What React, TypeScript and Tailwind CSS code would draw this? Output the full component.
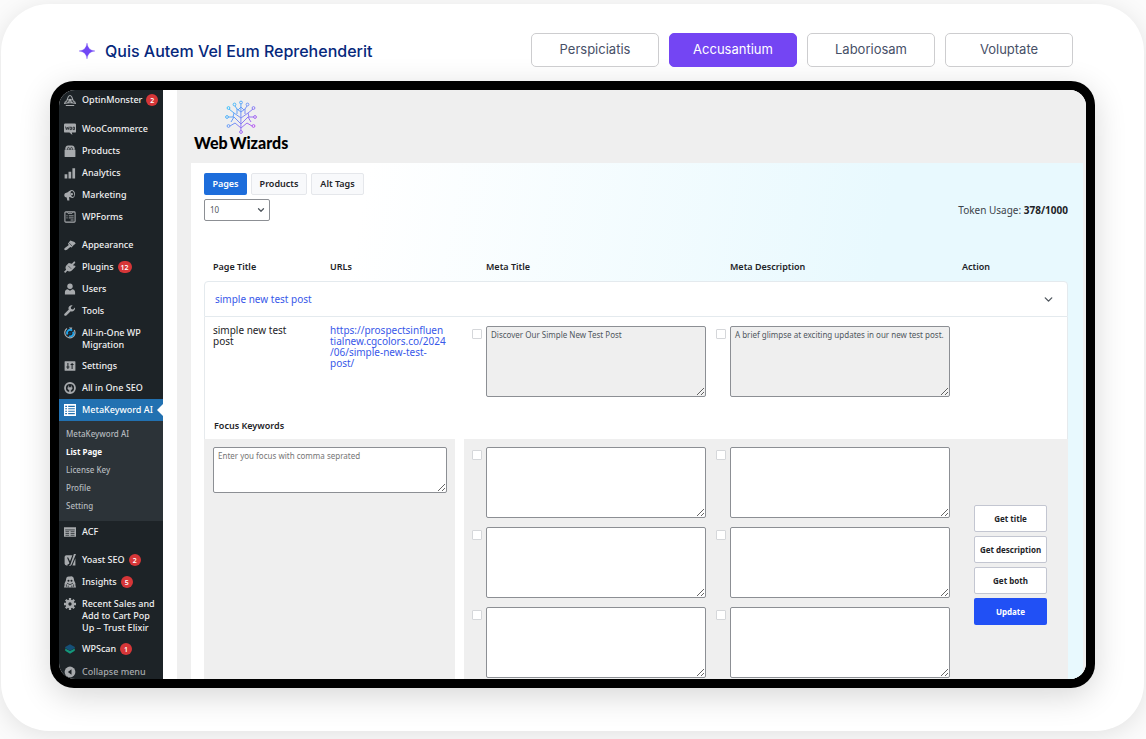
import type { ReactNode } from "react";
import { ChevronDown } from "lucide-react";

const topTabs = ["Perspiciatis", "Accusantium", "Laboriosam", "Voluptate"];

function Glyph({ children, box = 20 }: { children: ReactNode; box?: number }) {
  return (
    <svg viewBox={`0 0 ${box} ${box}`} className="size-3 shrink-0" fill="currentColor" aria-hidden="true">
      {children}
    </svg>
  );
}

const icons: Record<string, ReactNode> = {
  monster: (
    <Glyph>
      <path d="M4 13 7 5q3-5 6 0l3 8M0 16q10-3 20 0M3 19h14M6 9l8 5M14 9l-8 5" fill="none" stroke="currentColor" strokeWidth="1.700" />
      <circle cx="10" cy="10" r="2.200" />
      <path d="m0 14 3-3v4zM20 14l-3-3v4z" />
    </Glyph>
  ),
  woo: (
    <Glyph>
      <path d="M2 1h16a2 2 0 0 1 2 2v11a2 2 0 0 1-2 2h-5l1 4-5-4H2a2 2 0 0 1-2-2V3a2 2 0 0 1 2-2z" />
      <path d="m2.500 6 1.500 5 1.500-4 1.500 4 1.500-5M10 7h2.500v4H10zM15 7h2.500v4H15z" fill="none" stroke="#1d2327" strokeWidth="1.300" />
    </Glyph>
  ),
  products: (
    <Glyph>
      <path d="M1 8h18v11a1 1 0 0 1-1 1H2a1 1 0 0 1-1-1z" />
      <path d="M2 8q0-7 5-7h6q5 0 5 7" />
      <path d="M6 8V6q0-2 1.500-2T9 6v2M11 8V6q0-2 1.500-2T14 6v2" fill="none" stroke="#1d2327" strokeWidth="1.200" />
    </Glyph>
  ),
  analytics: (
    <Glyph>
      <path d="M1 12h4.500v7H1zM7.500 8H12v11H7.500zM14 2h4.500v17H14z" />
    </Glyph>
  ),
  marketing: (
    <Glyph>
      <path d="M12.500 1.500c3.500 0 6 3 6 7s-2 6.500-5 6.500c-1.500 0-2.500-1-4-1.500l-1 .2.500 5.300H5.500L4.500 14C2 14 .5 12.500.5 10.300c0-2 1.300-3.500 3.500-4C7 5.500 9.500 1.500 12.500 1.500z" />
      <ellipse cx="14" cy="8.200" rx="2.900" ry="5" fill="#1d2327" transform="rotate(-14 14 8)" />
      <circle cx="13" cy="8.500" r="2" />
    </Glyph>
  ),
  forms: (
    <Glyph>
      <rect x="1.500" y="1.500" width="17" height="17" rx="1.500" fill="none" stroke="currentColor" strokeWidth="1.800" />
      <path d="m5 2 3 3 2-2 2 2 3-3M4 8h2M8 8h8M4 11.500h2M8 11.500h8M11 15h5" fill="none" stroke="currentColor" strokeWidth="1.500" />
    </Glyph>
  ),
  appearance: (
    <Glyph>
      <path d="m10.500 2.500 7 2.500 2 2.500-4 3.500-2.500 3-2.500-.5-5.500 4.500c-1.500 1-4 1-4.500-.5s.5-2.500 2-3.500L8 10 6.500 8z" />
      <path d="m8.500 6.500 5.500 6" stroke="#1d2327" strokeWidth="1" />
    </Glyph>
  ),
  plugins: (
    <Glyph>
      <path d="m13.100 4.400 3.100-3.300c.5-.5 1.700-.6 2.200 0s.5 1.600 0 2.100l-3.200 3.300 1.700 1.700 1.300-1.300 1 2.600-6.200 6.200c-2 2-5.200 2.200-7.400.7L2 20 0 18l3.500-3.600C2 12.200 2.200 9 4.200 7L8 3.200z" />
      <path d="m7 8 5 5" stroke="#1d2327" strokeWidth="1" />
    </Glyph>
  ),
  users: (
    <Glyph>
      <circle cx="10" cy="5.500" r="4.500" />
      <path d="M1.500 19v-3.500c0-3 2.500-5 4.500-5l4 2.500 4-2.500c2 0 4.500 2 4.500 5V19z" />
    </Glyph>
  ),
  tools: (
    <Glyph>
      <path d="M16.700 9.300c-1.500 1.500-3.700 1.800-5.500 1L4 17.500c-.8.800-2.300.8-3.100 0s-.8-2.200 0-3L8 7.500c-1-2-.6-4 .9-5.500S12.500 0 14.300.7l-3 3 .7 2.800 3 .8 3.100-3c.8 1.800.2 3.400-1.400 5z" />
    </Glyph>
  ),
  migration: (
    <Glyph>
      <path d="M5 2.500A8.500 8.500 0 1 0 17 5" fill="none" stroke="currentColor" strokeWidth="2" />
      <path d="M8 1h6l-2 4z" />
      <path d="M6 12.500A5 5 0 0 1 13.500 6M15 8a5 5 0 0 1-6.500 7" fill="none" stroke="#1fa2e8" strokeWidth="3" />
      <circle cx="10.300" cy="10.300" r="1.500" fill="#0b4468" />
    </Glyph>
  ),
  settings: (
    <Glyph>
      <path d="M2 2h16a1 1 0 0 1 1 1v14a1 1 0 0 1-1 1H2a1 1 0 0 1-1-1V3a1 1 0 0 1 1-1z" />
      <path d="M6.500 5v10M13.500 5v10M4 11.500h5M11 7.500h5" stroke="#1d2327" strokeWidth="1.700" />
    </Glyph>
  ),
  seo: (
    <Glyph>
      <circle cx="10" cy="10" r="8.300" fill="none" stroke="currentColor" strokeWidth="3" />
      <path d="M7.500 6v3M12.500 6v3M6.500 9h7v2.500L11 13.500V17H9v-3.500l-2.500-2z" stroke="currentColor" strokeWidth="1" />
    </Glyph>
  ),
  list: (
    <Glyph>
      <rect x="0" y="0" width="20" height="20" fill="#fff" />
      <path d="M2 4h3M2 8h3M2 12h3M2 16h3M7 4h11M7 8h11M7 12h11M7 16h11" stroke="#2271b1" strokeWidth="1.900" />
    </Glyph>
  ),
  acf: (
    <Glyph>
      <path d="M0 2h20v16H0z" />
      <path d="M2 6.500h16M2.500 9.500h6M2.500 12.500h6M2.500 15.500h6M11 9.500h6.500M11 12.500h6.500M11 15.500h6.500" stroke="#1d2327" strokeWidth="1.200" />
    </Glyph>
  ),
  yoast: (
    <Glyph>
      <path d="M4 2h10l-4 10-3-6H5l4 9c-.5 1.500-1 2-3 2v2H4a3 3 0 0 1-3-3V5a3 3 0 0 1 3-3z" />
      <path d="M16.500 0H20l-7 17c-1 2-2 3-5 3 3-2 3-3 3.500-5zM19 7v12h-5z" />
    </Glyph>
  ),
  insights: (
    <Glyph>
      <path d="M4 3q2-3 6-2 4-2 6 2l1 5 2 4v3l1 4H0l1-4v-3l2-4z" />
      <circle cx="7.500" cy="8" r="1.700" fill="#1d2327" />
      <circle cx="12.500" cy="8" r="1.700" fill="#1d2327" />
      <path d="M5 12q5 5 10 0M7 16v3M13 16v3M4 14v4M16 14v4" fill="none" stroke="#1d2327" strokeWidth="1.200" />
    </Glyph>
  ),
  gear: (
    <Glyph>
      <circle cx="10" cy="10" r="5" fill="none" stroke="currentColor" strokeWidth="4.500" />
      <path d="M10 0v4M10 16v4M0 10h4M16 10h4M3 3l3 3M14 14l3 3M17 3l-3 3M6 14l-3 3" stroke="currentColor" strokeWidth="3.800" />
    </Glyph>
  ),
  scan: (
    <Glyph>
      <path d="m2 9 8 4.500L18 9v4l-8 5-8-5z" fill="#14967a" />
      <path d="m10 2 8 4.500v2l-8 4.500-8-4.500v-2z" fill="#155078" />
    </Glyph>
  ),
  collapse: (
    <Glyph>
      <circle cx="10" cy="10" r="9" />
      <path d="M12.500 5.500v9L6.500 10z" fill="#1d2327" />
    </Glyph>
  ),
};

type Item = { icon: string; label: string; badge?: string };

const storeItems: Item[] = [
  { icon: "woo", label: "WooCommerce" },
  { icon: "products", label: "Products" },
  { icon: "analytics", label: "Analytics" },
  { icon: "marketing", label: "Marketing" },
  { icon: "forms", label: "WPForms" },
];
const siteItems: Item[] = [
  { icon: "appearance", label: "Appearance" },
  { icon: "plugins", label: "Plugins", badge: "12" },
  { icon: "users", label: "Users" },
  { icon: "tools", label: "Tools" },
];
const subItems = ["MetaKeyword AI", "List Page", "License Key", "Profile", "Setting"];

function Badge({ children }: { children: ReactNode }) {
  return (
    <span className="ml-1 flex h-3 min-w-3 items-center justify-center rounded-full bg-[#d63638] px-[3px] text-[7px] leading-none font-semibold text-white">
      {children}
    </span>
  );
}

function MenuItem({ icon, label, badge }: Item) {
  return (
    <a href="#" className="flex h-[22px] items-center pl-[5px] whitespace-nowrap">
      <span className="text-[#a7aaad]">{icons[icon]}</span>
      <span className="ml-[6px]">{label}</span>
      {badge && <Badge>{badge}</Badge>}
    </a>
  );
}

function TallItem({ icon, label }: Item) {
  return (
    <a href="#" className="flex pt-[5px] pb-1 pl-[5px] leading-3">
      <span className="text-[#a7aaad]">{icons[icon]}</span>
      <span className="ml-[6px]">{label}</span>
    </a>
  );
}

function Sidebar() {
  return (
    <nav className="w-[104px] shrink-0 bg-[#1d2327] text-[9px] font-medium text-[#f0f0f1]">
      <a href="#" className="mb-2 flex h-5 items-center pl-[5px]">
        <span className="text-[#a7aaad]">{icons.monster}</span>
        <span className="ml-[6px]">OptinMonster</span>
        <Badge>2</Badge>
      </a>
      <div className="mb-[6px]">
        {storeItems.map((item) => (
          <MenuItem key={item.label} {...item} />
        ))}
      </div>
      {siteItems.map((item) => (
        <MenuItem key={item.label} {...item} />
      ))}
      <TallItem icon="migration" label="All-in-One WP Migration" />
      <MenuItem icon="settings" label="Settings" />
      <MenuItem icon="seo" label="All in One SEO" />
      <div className="relative bg-[#2271b1] text-white">
        <MenuItem icon="list" label="MetaKeyword AI" />
        <span className="absolute top-1/2 right-0 -translate-y-1/2 border-y-[6px] border-r-[6px] border-y-transparent border-r-white" />
      </div>
      <div className="bg-[#2c3338] pt-1 pb-[6px] pl-[7px] text-[8px]">
        {subItems.map((label) => (
          <a
            key={label}
            href="#"
            className={`flex h-[18px] items-center ${label === "List Page" ? "font-bold text-white" : "font-medium text-[#b4b9be]"}`}
          >
            {label}
          </a>
        ))}
      </div>
      <div className="mb-[6px]">
        <MenuItem icon="acf" label="ACF" />
      </div>
      <MenuItem icon="yoast" label="Yoast SEO" badge="2" />
      <MenuItem icon="insights" label="Insights" badge="5" />
      <TallItem icon="gear" label="Recent Sales and Add to Cart Pop Up – Trust Elixir" />
      <MenuItem icon="scan" label="WPScan" badge="1" />
      <button type="button" className="flex h-[19px] w-full items-end pb-px pl-[5px] text-[#a7aaad]">
        {icons.collapse}
        <span className="ml-[6px] leading-3">Collapse menu</span>
      </button>
    </nav>
  );
}

function TreeLogo() {
  const tips = [
    [16, 2.5], [9.5, 4.5], [22.5, 4.5], [3.5, 8], [28.5, 8], [2, 17], [30, 17], [3.5, 26], [28.5, 26], [16, 32],
  ];
  return (
    <svg viewBox="0 0 32 34" className="h-[34px] w-8" fill="none" aria-hidden="true">
      <defs>
        <linearGradient id="tree" gradientUnits="userSpaceOnUse" x1="2" y1="6" x2="30" y2="28">
          <stop offset="0" stopColor="#38c6fb" />
          <stop offset=".5" stopColor="#7a8df5" />
          <stop offset="1" stopColor="#bd4df0" />
        </linearGradient>
      </defs>
      <g stroke="url(#tree)" strokeWidth="1">
        <path d="M15.900 4v27M16 12l-4-3-2-3M16 12l4-3 2-3M16 18l-7-5-5-4M16 18l7-5 5-4M16 24l-7-7H3M16 24l7-7h6M16 28l-6-5-5 3M16 28l6-5 5 3M9 17l-3 5M23 17l3 5M12 9v5M20 9v5M9 13l-1 4M23 13l1 4M16 7l-3 3M16 7l3 3" />
        {tips.map(([x, y]) => (
          <circle key={`${x}-${y}`} cx={x} cy={y} r="1.400" />
        ))}
      </g>
    </svg>
  );
}

const areaClass =
  "block w-full min-w-0 resize rounded-[2px] border border-[#8c8f94] px-1 py-[3px] text-[8px] leading-[10px] text-[#50575e] placeholder:text-[#757575]";

function MetaField({ name, value, readOnly }: { name: string; value?: string; readOnly?: boolean }) {
  return (
    <div className="flex items-start gap-1 pr-[2px] pl-2">
      <input
        type="checkbox"
        aria-label={`Use ${name}`}
        className="mt-[3px] size-[10px] shrink-0 appearance-none rounded-[1px] border border-[#d5d7da] bg-white"
      />
      <textarea
        aria-label={name}
        defaultValue={value}
        readOnly={readOnly}
        className={`${areaClass} h-[71px] ${readOnly ? "bg-[#efefef]" : "bg-white"}`}
      />
    </div>
  );
}

function MetaStack({ name }: { name: string }) {
  return (
    <div className="flex flex-col gap-[9px] pt-2 pb-px">
      {[1, 2, 3].map((n) => (
        <MetaField key={n} name={`${name} ${n}`} />
      ))}
    </div>
  );
}

function PagesTable() {
  return (
    <table className="w-full table-fixed border-separate border-spacing-0 text-left">
      <colgroup>
        <col className="w-[117px]" />
        <col className="w-[143px]" />
        <col />
        <col />
        <col className="w-[116px]" />
      </colgroup>
      <thead className="text-[9px] text-[#1d2327]">
        <tr className="h-7">
          <th className="pl-[9px] font-semibold">Page Title</th>
          <th className="pl-[9px] font-semibold">URLs</th>
          <th className="pl-[22px] font-semibold">Meta Title</th>
          <th className="pl-[22px] font-semibold">Meta Description</th>
          <th className="pl-[10px] font-semibold">Action</th>
        </tr>
      </thead>
      <tbody className="text-[10px] leading-[11px] text-[#1d2327]">
        <tr>
          <td colSpan={5} className="rounded-t-[4px] border border-[#e4eaee] bg-white p-0">
            <button type="button" className="flex h-[34px] w-full items-center justify-between pr-3 pl-[10px] text-[#3858e9]">
              simple new test post
              <ChevronDown className="size-[13px] text-[#50575e]" strokeWidth={2.5} />
            </button>
          </td>
        </tr>
        <tr className="bg-white align-top">
          <td className="h-[98px] border-l border-[#e6eaed] py-2 pr-5 pl-2">simple new test post</td>
          <td className="py-2 pr-5 pl-[9px]">
            <a href="#" className="text-[#3858e9]">
              https://prospectsinfluen<wbr />tialnew.cgcolors.co/2024<wbr />/06/simple-new-test-<wbr />post/
            </a>
          </td>
          <td className="p-0 pt-[9px]">
            <MetaField name="Current meta title" value="Discover Our Simple New Test Post" readOnly />
          </td>
          <td className="p-0 pt-[9px]">
            <MetaField
              name="Current meta description"
              value="A brief glimpse at exciting updates in our new test post."
              readOnly
            />
          </td>
          <td className="border-r border-[#e6eaed] p-0" />
        </tr>
        <tr className="bg-white">
          <td colSpan={5} className="h-6 border-x border-[#e6eaed] p-0 pb-1 pl-[9px] align-middle text-[9px] font-semibold">
            <label htmlFor="focus">Focus Keywords</label>
          </td>
        </tr>
        <tr className="bg-[#efefef] align-top">
          <td colSpan={2} className="border-r-[9px] border-white pt-2 pr-2 pb-0 pl-[9px]">
            <textarea
              id="focus"
              placeholder="Enter you focus with comma seprated"
              className={`${areaClass} h-[46px] bg-white`}
            />
          </td>
          <td className="p-0">
            <MetaStack name="Meta title suggestion" />
          </td>
          <td className="p-0">
            <MetaStack name="Meta description suggestion" />
          </td>
          <td className="p-0 pt-[66px] pr-[21px] pl-[22px]">
            <div className="flex flex-col gap-1 text-[8px] font-bold whitespace-nowrap">
              {["Get title", "Get description", "Get both"].map((label) => (
                <button key={label} type="button" className="h-[27px] rounded-[2px] border border-[#c3c6d1] bg-white">
                  {label}
                </button>
              ))}
              <button type="button" className="h-[27px] rounded-[2px] bg-[#2150f5] text-white">
                Update
              </button>
            </div>
          </td>
        </tr>
      </tbody>
    </table>
  );
}

function Workspace() {
  return (
    <main className="min-w-0 flex-1 bg-[#efefef] pl-[14px]">
      <div className="flex h-[73px] w-fit flex-col items-center px-[3px] pt-[10px]">
        <TreeLogo />
        <span className="flex gap-[2px] text-[16px] leading-[18px] font-black text-black font-['Lato',sans-serif]">
          <span>Web</span> <span>Wizards</span>
        </span>
      </div>
      <section className="mr-[3px] flex min-h-[516px] flex-col bg-linear-[100deg,#ffffff_18%,#e8f9fe_72%] pr-[15px] pl-[13px]">
        <div className="flex gap-1 pt-[10px] text-[9px] font-semibold text-[#1d2327]">
          <button type="button" className="h-[22px] w-[43px] rounded-[2px] bg-[#1d6ddb] text-white">
            Pages
          </button>
          <button type="button" className="h-[22px] w-14 rounded-[2px] border border-[#e5e7eb] bg-[#f8f9fb]">
            Products
          </button>
          <button type="button" className="h-[22px] w-[53px] rounded-[2px] border border-[#e5e7eb] bg-[#f8f9fb]">
            Alt Tags
          </button>
        </div>
        <div className="mt-1 mb-[32px] flex items-center justify-between">
          <div className="grid items-center">
            <select
              aria-label="Rows per page"
              defaultValue="10"
              className="col-start-1 row-start-1 h-[22px] w-[66px] appearance-none rounded-[2px] border border-[#8c8f94] bg-white pl-[5px] text-[8px] text-[#50575e]"
            >
              <option>10</option>
              <option>25</option>
            </select>
            <ChevronDown className="pointer-events-none col-start-1 row-start-1 mr-1 size-[10px] justify-self-end text-[#50575e]" strokeWidth={3} />
          </div>
          <p className="text-[10px] leading-3 text-[#3c434a]">
            Token Usage: <b className="text-[#1d2327]">378/1000</b>
          </p>
        </div>
        <PagesTable />
      </section>
    </main>
  );
}

export default function App() {
  return (
    <div className="overflow-hidden bg-[#fbfbfb] pt-1 pr-[2px] pb-2 pl-px font-['Inter',sans-serif]">
      <div className="rounded-[48px] bg-white px-[49px] pt-[29px] pb-[43px] shadow-[0_4px_24px_rgba(0,0,0,0.10)]">
        <header className="mb-[14px] flex items-center justify-between pr-[22px] pl-7">
          <h1 className="flex items-center gap-[9px] pt-[2px] text-[16px] font-medium text-[#06287c]">
            <svg viewBox="0 0 18 18" className="size-[18px]" aria-hidden="true">
              <path d="M9 1Q9.700 8.300 17 9 9.700 9.700 9 17 8.300 9.700 1 9 8.300 8.300 9 1z" fill="#7047f5" stroke="#7047f5" strokeWidth=".3" />
            </svg>
            Quis Autem Vel Eum Reprehenderit
          </h1>
          <div className="flex gap-[10px]">
            {topTabs.map((label) => (
              <button
                key={label}
                type="button"
                className={`h-[34px] w-32 rounded-[5px] border text-[13px] ${
                  label === "Accusantium"
                    ? "border-[#7445f3] bg-[#7445f3] text-white"
                    : "border-[#cdcdcf] bg-white text-[#475067]"
                }`}
              >
                {label}
              </button>
            ))}
          </div>
        </header>
        <div className="rounded-[24px] bg-black p-[9px] shadow-[0_8px_32px_rgba(0,0,0,0.16)]">
          <div className="flex overflow-hidden rounded-[16px] bg-white font-['Noto_Sans',sans-serif]">
            <Sidebar />
            <div className="w-[14px] shrink-0 bg-white" />
            <Workspace />
          </div>
        </div>
      </div>
    </div>
  );
}
